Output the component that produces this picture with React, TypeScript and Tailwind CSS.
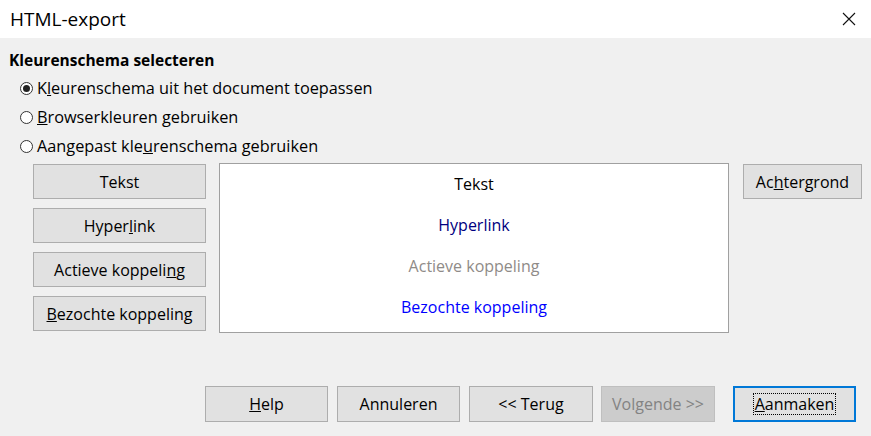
import React from "react";

const font = { fontFamily: '"Open Sans", "Liberation Sans", Arial, sans-serif' };

function Radio({ checked }: { checked?: boolean }) {
  return (
    <span className="w-[13px] h-[13px] rounded-full border border-[#333] bg-white flex items-center justify-center shrink-0">
      {checked && <span className="w-[7px] h-[7px] rounded-full bg-[#222]" />}
    </span>
  );
}

function Btn({ children, className = "" }: { children: React.ReactNode; className?: string }) {
  return (
    <div
      className={`h-[35px] border border-[#adadad] bg-[#e1e1e1] flex items-center justify-center text-[16px] leading-[20px] text-black ${className}`}
    >
      {children}
    </div>
  );
}

export default function App() {
  return (
    <div className="w-[871px] h-[436px] bg-[#f0f0f0] flex flex-col overflow-hidden" style={font}>
      {/* Title bar */}
      <div className="h-[38px] bg-white flex items-center justify-between pl-[10px] pr-[14px]">
        <span className="text-[19px] text-black">HTML-export</span>
        <svg width="14" height="14" viewBox="0 0 14 14" className="mr-[1px]">
          <path d="M1 1 L13 13 M13 1 L1 13" stroke="#111" strokeWidth="1.1" />
        </svg>
      </div>

      {/* Heading */}
      <div className="pl-[9px] pt-[12px] text-[15.5px] font-bold text-black leading-[20px]">
        Kleurenschema selecteren
      </div>

      {/* Radios */}
      <div className="pl-[20px] pt-[8px] flex flex-col gap-[9px] text-[16.3px] text-black leading-[20px]">
        <div className="flex items-center gap-[4px]">
          <Radio checked />
          <span>
            K<u>l</u>eurenschema uit het document toepassen
          </span>
        </div>
        <div className="flex items-center gap-[4px]">
          <Radio />
          <span>
            <u>B</u>rowserkleuren gebruiken
          </span>
        </div>
        <div className="flex items-center gap-[4px]">
          <Radio />
          <span>
            Aangepast kle<u>u</u>renschema gebruiken
          </span>
        </div>
      </div>

      {/* Colour area */}
      <div className="flex items-start pl-[33px] mt-[7px]">
        <div className="flex flex-col gap-[9px] w-[173px] pt-[1px]">
          <Btn>Tekst</Btn>
          <Btn>
            Hyper<u>l</u>ink
          </Btn>
          <Btn>
            Actieve koppeli<u>n</u>g
          </Btn>
          <Btn>
            <u>B</u>ezochte koppeling
          </Btn>
        </div>
        <div className="ml-[13px] w-[510px] h-[170px] bg-white border border-[#a0a0a0] flex flex-col items-center pt-[10px] gap-[21px] text-[16px] leading-[20px]">
          <span className="text-black">Tekst</span>
          <span className="text-[#000080]">Hyperlink</span>
          <span className="text-[#8f8b88]">Actieve koppeling</span>
          <span className="text-[#0000ff]">Bezochte koppeling</span>
        </div>
        <div className="ml-[14px] pt-[1px] w-[119px]">
          <Btn>
            Ac<u>h</u>tergrond
          </Btn>
        </div>
      </div>

      {/* Bottom buttons */}
      <div className="flex items-center pl-[205px] mt-[53px]">
        <Btn className="w-[123px] h-[36px]">
          <u>H</u>elp
        </Btn>
        <Btn className="w-[123px] h-[36px] ml-[9px]">Annuleren</Btn>
        <Btn className="w-[124px] h-[36px] ml-[9px]">&lt;&lt; Terug</Btn>
        <div className="w-[114px] h-[36px] ml-[8px] border border-[#bfbfbf] bg-[#cccccc] flex items-center justify-center text-[16px] leading-[20px] text-[#838383]">
          Vol<u>g</u>ende &gt;&gt;
        </div>
        <div className="w-[123px] h-[36px] ml-[18px] border-2 border-[#0078d7] bg-[#e1e1e1] flex items-center justify-center text-[16px] text-black">
          <span className="border border-dotted border-black px-[1px] leading-[20px]">
            <u>A</u>anmaken
          </span>
        </div>
      </div>
    </div>
  );
}
